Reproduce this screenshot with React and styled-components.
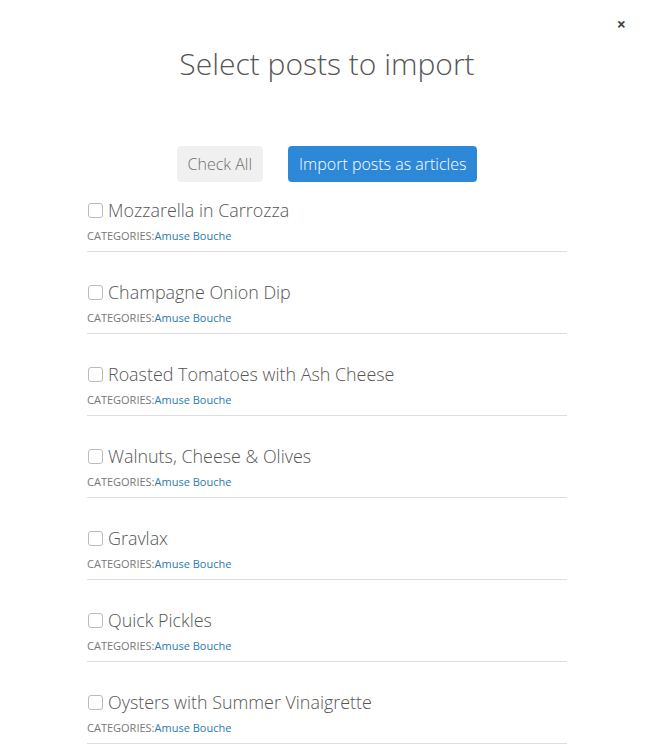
import React from 'react';
import styled, { createGlobalStyle } from 'styled-components';

const posts = [
  'Mozzarella in Carrozza',
  'Champagne Onion Dip',
  'Roasted Tomatoes with Ash Cheese',
  'Walnuts, Cheese & Olives',
  'Gravlax',
  'Quick Pickles',
  'Oysters with Summer Vinaigrette',
];

const GlobalStyle = createGlobalStyle`
  body {
    margin: 0;
    background: #fff;
    font-family: "Open Sans", "Liberation Sans", sans-serif;
    color: #555;
  }
`;

const App = () => {
  return (
    <Modal>
      <GlobalStyle />
      <Close>×</Close>
      <Title>Select posts to import</Title>
      <Actions>
        <Button>Check All</Button>
        <Button primary>Import posts as articles</Button>
      </Actions>
      <List>
        {posts.map((p) => (
          <Item key={p}>
            <Label>
              <Box type="checkbox" />
              {p}
            </Label>
            <Meta>
              CATEGORIES:<a href="#">Amuse Bouche</a>
            </Meta>
          </Item>
        ))}
      </List>
    </Modal>
  );
};

export default App;

const Modal = styled.div`
  position: relative;
  width: 654px;
  height: 744px;
  overflow: hidden;
  padding-top: 44px;
  box-sizing: border-box;
`;

const Close = styled.span`
  position: absolute;
  top: 13px;
  right: 28px;
  font-size: 16px;
  font-weight: 700;
  color: #444;
  cursor: pointer;
`;

const Title = styled.h1`
  margin: 0;
  text-align: center;
  font-size: 30px;
  font-weight: 300;
  line-height: 40px;
  color: #555;
`;

const Actions = styled.div`
  display: flex;
  justify-content: center;
  gap: 25px;
  margin-top: 62px;
`;

const Button = styled.button`
  font-family: inherit;
  font-size: 16px;
  font-weight: 300;
  height: 36px;
  padding: 0 11px;
  border: none;
  border-radius: 4px;
  background: ${(p) => (p.primary ? '#2e88d8' : '#f0f0f0')};
  color: ${(p) => (p.primary ? '#fff' : '#6f6f6f')};
  cursor: pointer;
`;

const List = styled.div`
  width: 480px;
  margin: 14px auto 0;
`;

const Item = styled.div`
  border-bottom: 1px solid #ddd;
  padding-bottom: 6px;
  margin-bottom: 26px;
`;

const Label = styled.label`
  display: flex;
  align-items: center;
  gap: 5px;
  font-size: 17.9px;
  font-weight: 300;
  line-height: 28px;
  color: #555;
`;

const Box = styled.input`
  appearance: none;
  flex: none;
  width: 15px;
  height: 15px;
  margin: 0 0 0 1px;
  border: 1px solid #bbb;
  border-radius: 3px;
  box-sizing: border-box;
  background: #fff;
`;

const Meta = styled.div`
  margin-top: 3px;
  font-size: 11px;
  line-height: 18px;
  color: #777;
  a {
    color: #2a7ab0;
    text-decoration: none;
  }
`;
